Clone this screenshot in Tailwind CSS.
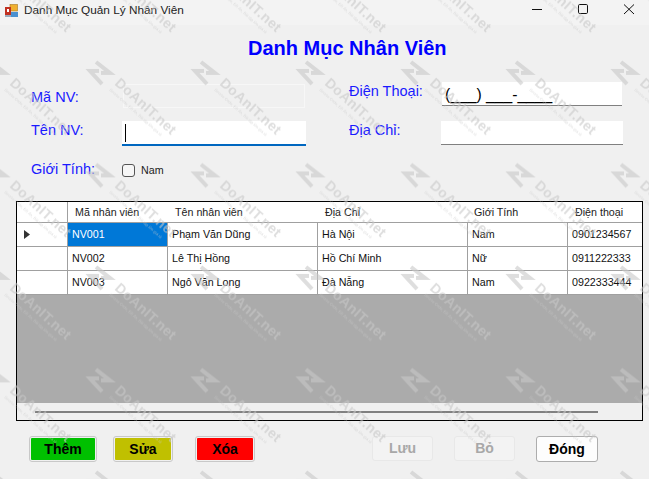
<!DOCTYPE html>
<html lang="vi">
<head>
  <meta charset="UTF-8" />
  <title>Danh Mục Quản Lý Nhân Viên</title>
  <script src="https://cdn.jsdelivr.net/npm/@tailwindcss/browser@4"></script>
</head>
<body class="bg-[#f0f0f0] font-['Liberation_Sans',Arial,sans-serif] overflow-hidden">
<div class="relative w-[649px] h-[479px] overflow-hidden">

  <!-- Thanh tiêu đề -->
  <div class="h-[25px] bg-[#f3f3f3] flex items-center pl-[5px] pb-[4px] text-[11.8px] text-[#222]">
    <svg width="13" height="14" viewBox="0 0 13 14" class="mr-[6px]">
      <rect x="5" y="0.5" width="7.5" height="6.5" fill="#f0b030" stroke="#a87820" stroke-width="0.6"/>
      <rect x="0" y="3" width="6" height="8" fill="#c03020"/>
      <rect x="2" y="5" width="2" height="3" fill="#fff"/>
      <rect x="6" y="8" width="7" height="5" fill="#4a90d0"/>
      <rect x="0" y="11" width="6" height="2" fill="#9ab"/>
    </svg>
    <span>Danh Mục Quản Lý Nhân Viên</span>
    <div class="ml-auto mt-[4px] flex items-center">
      <svg width="46" height="25" viewBox="0 0 46 25"><path d="M0 9.5H10" stroke="#111" fill="none"/></svg>
      <svg width="46" height="25" viewBox="0 0 46 25"><rect x="0.5" y="4.5" width="9" height="9" rx="1.2" stroke="#111" fill="none"/></svg>
      <svg width="25" height="25" viewBox="0 0 25 25"><path d="M0 4.5L10 14M10 4.5L0 14" stroke="#111" fill="none"/></svg>
    </div>
  </div>

  <h1 class="mt-[12px] pl-[248px] text-[20px] leading-[23px] font-bold text-[#0000ff]">Danh Mục Nhân Viên</h1>

  <!-- Form nhập -->
  <div class="mt-[23px] pl-[31px] flex text-[14.5px] text-[#1a1aff]">
    <div class="w-[275px] flex flex-col">
      <div class="h-[24px] mt-[1px] flex items-center">
        <span class="w-[92px] pt-[3px]">Mã NV:</span>
        <div class="w-[182px] h-[24px] border border-[#f7f7f7] bg-[#f0f0f0]"></div>
      </div>
      <div class="h-[25px] mt-[13px] flex items-center">
        <span class="w-[91px] -mt-[6px]">Tên NV:</span>
        <div class="w-[184px] h-[25px] bg-white border-b-2 border-[#0067c0] flex items-start pl-[3px] pt-[3px]">
          <div class="w-px h-[18px] bg-black"></div>
        </div>
      </div>
      <div class="h-[20px] mt-[14px] flex items-center">
        <span class="w-[91px]">Giới Tính:</span>
        <div class="w-[13px] h-[13px] border border-[#555] rounded-[3px] bg-[#f6f6f6]"></div>
        <span class="ml-[6px] text-[10.7px] text-[#222]">Nam</span>
      </div>
    </div>
    <div class="pl-[43px] flex flex-col -mt-[1px]">
      <div class="h-[24px] flex items-center">
        <span class="w-[93px] -mt-[5px]">Điện Thoại:</span>
        <div class="w-[180px] h-[24px] bg-white border-b border-[#808080] pl-[3px] text-[15.7px] leading-[26px] text-black">(___) ___-____</div>
      </div>
      <div class="h-[24px] mt-[15px] flex items-center">
        <span class="w-[92px] -mt-[5px]">Địa Chỉ:</span>
        <div class="w-[182px] h-[24px] bg-white border-b border-[#808080]"></div>
      </div>
    </div>
  </div>

  <!-- Bảng dữ liệu -->
  <div class="ml-[16px] mt-[21px] w-[627px] h-[220px] border border-black flex flex-col bg-[#f0f0f0]">
    <div class="grid grid-cols-[50px_100px_150px_150px_100px_75px] text-[10.7px] leading-[15px] text-[#222] bg-white">
      <div class="h-[20px]"></div>
      <div class="h-[20px] pl-[7px] pt-[3px] border-l border-[#a0a0a0]">Mã nhân viên</div>
      <div class="h-[20px] pl-[8px] pt-[3px]">Tên nhân viên</div>
      <div class="h-[20px] pl-[8px] pt-[3px]">Địa Chỉ</div>
      <div class="h-[20px] pl-[7px] pt-[3px]">Giới Tính</div>
      <div class="h-[20px] pl-[8px] pt-[3px]">Điện thoại</div>
    </div>
    <div class="grid grid-cols-[50px_100px_150px_150px_100px_75px] grid-rows-[25px_24px_24px] text-[10.7px] leading-[23px] text-[#111] bg-white">
      <div class="border-y border-[#a0a0a0] flex items-center pl-[7px]"><svg width="6" height="9" viewBox="0 0 6 9"><path d="M0 0L6 4.5L0 9Z" fill="#333"/></svg></div>
      <div class="border-l border-y border-[#a0a0a0] bg-[#0078d7] pl-[4px] text-white">NV001</div>
      <div class="border-l border-y border-[#a0a0a0] pl-[4px]">Phạm Văn Dũng</div>
      <div class="border-l border-y border-[#a0a0a0] pl-[4px]">Hà Nội</div>
      <div class="border-l border-y border-[#a0a0a0] pl-[4px]">Nam</div>
      <div class="border-l border-y border-[#a0a0a0] pl-[4px]">0901234567</div>

      <div class="border-b border-[#a0a0a0]"></div>
      <div class="border-l border-b border-[#a0a0a0] pl-[4px]">NV002</div>
      <div class="border-l border-b border-[#a0a0a0] pl-[4px]">Lê Thị Hồng</div>
      <div class="border-l border-b border-[#a0a0a0] pl-[4px]">Hồ Chí Minh</div>
      <div class="border-l border-b border-[#a0a0a0] pl-[4px]">Nữ</div>
      <div class="border-l border-b border-[#a0a0a0] pl-[4px]">0911222333</div>

      <div class="border-b border-[#a0a0a0]"></div>
      <div class="border-l border-b border-[#a0a0a0] pl-[4px]">NV003</div>
      <div class="border-l border-b border-[#a0a0a0] pl-[4px]">Ngô Văn Long</div>
      <div class="border-l border-b border-[#a0a0a0] pl-[4px]">Đà Nẵng</div>
      <div class="border-l border-b border-[#a0a0a0] pl-[4px]">Nam</div>
      <div class="border-l border-b border-[#a0a0a0] pl-[4px]">0922333444</div>
    </div>
    <div class="flex-1 bg-[#ababab]"></div>
    <div class="h-[17px] pl-[18px] pt-[8px]"><div class="w-[563px] h-[2px] bg-[#808080]"></div></div>
  </div>

  <!-- Các nút -->
  <div class="mt-[15px] pl-[29px] flex items-start text-[14px] font-bold">
    <button class="w-[68px] h-[26px] bg-[#00c000] border-2 border-[#f0f0f0] outline outline-[#c8c8c8] -outline-offset-1 rounded-[3px] text-black">Thêm</button>
    <button class="ml-[16px] w-[60px] h-[26px] bg-[#c0c000] border-2 border-[#f0f0f0] outline outline-[#c8c8c8] -outline-offset-1 rounded-[3px] text-black">Sửa</button>
    <button class="ml-[22px] w-[60px] h-[26px] bg-[#ff0000] border-2 border-[#f0f0f0] outline outline-[#c8c8c8] -outline-offset-1 rounded-[3px] text-black">Xóa</button>
    <button class="ml-[117px] w-[61px] h-[25px] bg-[#f3f3f3] border border-[#e8e8e8] rounded-[3px] text-[#a8a8a8]">Lưu</button>
    <button class="ml-[21px] w-[61px] h-[25px] bg-[#f3f3f3] border border-[#e8e8e8] rounded-[3px] text-[#a8a8a8]">Bỏ</button>
    <button class="ml-[21px] w-[62px] h-[26px] bg-[#fdfdfd] border border-[#adadad] rounded-[3px] text-black">Đóng</button>
  </div>

  <!-- Watermark -->
  <svg class="absolute inset-0 pointer-events-none" width="649" height="479">
    <defs>
      <pattern id="wm" x="85" y="58" width="105" height="102.5" patternUnits="userSpaceOnUse">
        <g fill="#c8c8c8">
          <path d="M11 4L25 15L16 15M14 13L5 13L17 26" fill="none" stroke="#c8c8c8" stroke-width="4"/>
          <text x="29" y="26" transform="rotate(42 29 26)" font-family="Liberation Sans" font-size="14" font-weight="bold" letter-spacing="0.4">DoAnIT.net</text>
          <text x="24" y="32" transform="rotate(42 24 32)" font-family="Liberation Sans" font-size="4">Source Code, Đồ Án, Bài tập lớn giá rẻ</text>
        </g>
      </pattern>
    </defs>
    <rect width="649" height="479" fill="url(#wm)" opacity="0.6"/>
  </svg>
</div>
</body>
</html>
